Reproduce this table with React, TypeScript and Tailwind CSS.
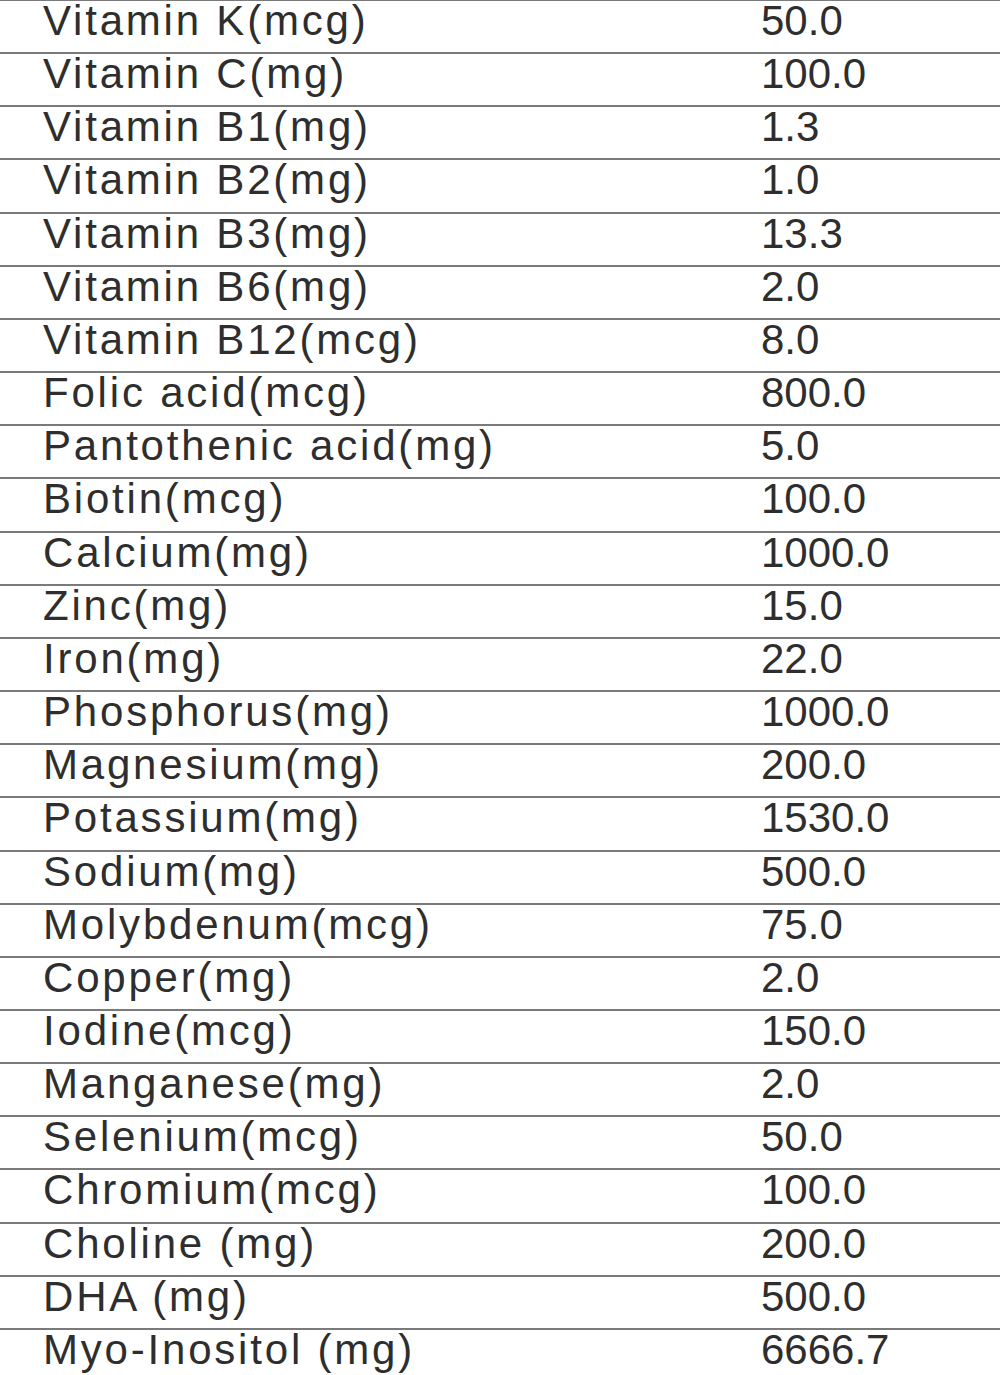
const rows: [string, string][] = [
  ["Vitamin K(mcg)", "50.0"],
  ["Vitamin C(mg)", "100.0"],
  ["Vitamin B1(mg)", "1.3"],
  ["Vitamin B2(mg)", "1.0"],
  ["Vitamin B3(mg)", "13.3"],
  ["Vitamin B6(mg)", "2.0"],
  ["Vitamin B12(mcg)", "8.0"],
  ["Folic acid(mcg)", "800.0"],
  ["Pantothenic acid(mg)", "5.0"],
  ["Biotin(mcg)", "100.0"],
  ["Calcium(mg)", "1000.0"],
  ["Zinc(mg)", "15.0"],
  ["Iron(mg)", "22.0"],
  ["Phosphorus(mg)", "1000.0"],
  ["Magnesium(mg)", "200.0"],
  ["Potassium(mg)", "1530.0"],
  ["Sodium(mg)", "500.0"],
  ["Molybdenum(mcg)", "75.0"],
  ["Copper(mg)", "2.0"],
  ["Iodine(mcg)", "150.0"],
  ["Manganese(mg)", "2.0"],
  ["Selenium(mcg)", "50.0"],
  ["Chromium(mcg)", "100.0"],
  ["Choline (mg)", "200.0"],
  ["DHA (mg)", "500.0"],
  ["Myo-Inositol (mg)", "6666.7"],
];

const App = () => {
  return (
    <main className="w-[1000px] h-[1375px] overflow-hidden bg-white font-['Liberation_Sans',Arial,sans-serif] text-[#2e2e2e]">
      <div className="-mt-px border-t-2 border-[#7a7a7a]">
        {rows.map(([name, value]) => (
          <div
            key={name}
            className="flex h-[53.16px] border-b-2 border-[#7a7a7a] text-[42px] leading-[39px]"
          >
            <span className="w-[761px] shrink-0 pl-[43px] tracking-[2.8px] whitespace-nowrap">{name}</span>
            <span className="whitespace-nowrap">{value}</span>
          </div>
        ))}
      </div>
    </main>
  );
};

export default App;
